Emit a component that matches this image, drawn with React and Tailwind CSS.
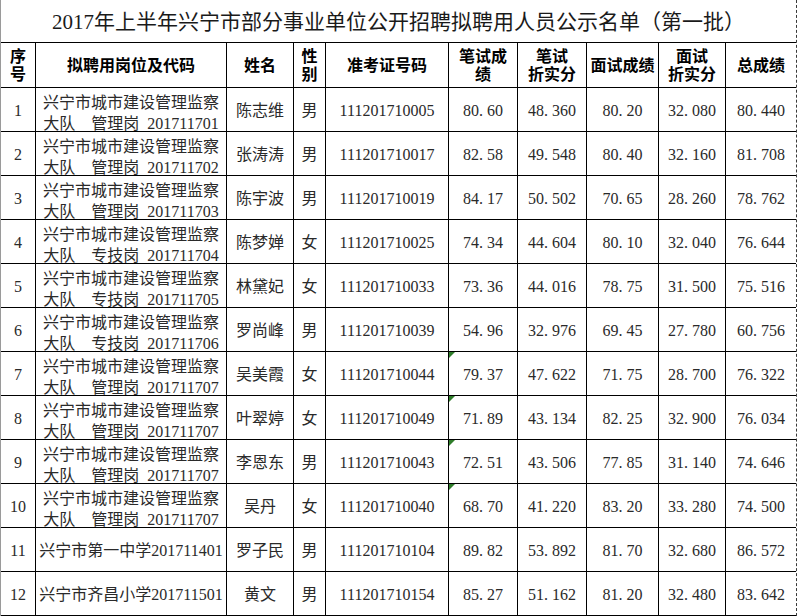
import React from "react";

const rows = [
  ["1", "管理岗", "201711701", "陈志维", "男", "111201710005", "80.60", "48.360", "80.20", "32.080", "80.440"],
  ["2", "管理岗", "201711702", "张涛涛", "男", "111201710017", "82.58", "49.548", "80.40", "32.160", "81.708"],
  ["3", "管理岗", "201711703", "陈宇波", "男", "111201710019", "84.17", "50.502", "70.65", "28.260", "78.762"],
  ["4", "专技岗", "201711704", "陈梦婵", "女", "111201710025", "74.34", "44.604", "80.10", "32.040", "76.644"],
  ["5", "专技岗", "201711705", "林黛妃", "女", "111201710033", "73.36", "44.016", "78.75", "31.500", "75.516"],
  ["6", "专技岗", "201711706", "罗尚峰", "男", "111201710039", "54.96", "32.976", "69.45", "27.780", "60.756"],
  ["7", "管理岗", "201711707", "吴美霞", "女", "111201710044", "79.37", "47.622", "71.75", "28.700", "76.322"],
  ["8", "管理岗", "201711707", "叶翠婷", "女", "111201710049", "71.89", "43.134", "82.25", "32.900", "76.034"],
  ["9", "管理岗", "201711707", "李恩东", "男", "111201710043", "72.51", "43.506", "77.85", "31.140", "74.646"],
  ["10", "管理岗", "201711707", "吴丹", "女", "111201710040", "68.70", "41.220", "83.20", "33.280", "74.500"],
  ["11", "", "兴宁市第一中学201711401", "罗子民", "男", "111201710104", "89.82", "53.892", "81.70", "32.680", "86.572"],
  ["12", "", "兴宁市齐昌小学201711501", "黄文", "男", "111201710154", "85.27", "51.162", "81.20", "32.480", "83.642"],
];

function Num({ v }) {
  const parts = v.split(".");
  return (
    <span>
      {parts[0]}
      {parts.length > 1 && (
        <>
          <span className="inline-block w-[8px] text-left">.</span>
          {parts[1]}
        </>
      )}
    </span>
  );
}

function HCell({ children, last }) {
  return (
    <div
      className={
        "flex h-[45px] flex-col items-center justify-center border-b border-black pt-[2px] text-center text-[16px] font-bold leading-[18px] text-black " +
        (last ? "" : "border-r")
      }
    >
      {children}
    </div>
  );
}

function Cell({ children, last, mark, cls = "pt-[2px]" }) {
  return (
    <div
      className={
        "relative flex h-[44px] flex-col items-center justify-center border-b border-black text-center text-[16px] leading-[21px] text-[#2a2a2a] " +
        (last ? "" : "border-r ") +
        cls
      }
    >
      {mark && (
        <span className="absolute left-0 top-0 h-0 w-0 border-r-[6px] border-t-[6px] border-r-transparent border-t-[#2f7d2a]" />
      )}
      {children}
    </div>
  );
}

export default function App() {
  return (
    <div className="h-[616px] w-[797px] overflow-hidden bg-white font-['Liberation_Serif','Noto_Sans_CJK_SC',serif]">
      <div className="h-full border-l border-[#9a9a9a]">
        <div className="h-full border-r border-dashed border-[#3a3a3a]">
          <div className="flex h-[42px] items-center justify-center pt-[3px] text-[21px] text-[#1a1a1a]">
            2017年上半年兴宁市部分事业单位公开招聘拟聘用人员公示名单（第一批）
          </div>
          <div className="grid grid-cols-[35px_191px_67px_32px_123px_69px_69px_72px_67px_70px] border-t border-black">
            <HCell>
              <span>序</span>
              <span>号</span>
            </HCell>
            <HCell>拟聘用岗位及代码</HCell>
            <HCell>姓名</HCell>
            <HCell>
              <span>性</span>
              <span>别</span>
            </HCell>
            <HCell>准考证号码</HCell>
            <HCell>
              <span>笔试成</span>
              <span>绩</span>
            </HCell>
            <HCell>
              <span>笔试</span>
              <span>折实分</span>
            </HCell>
            <HCell>面试成绩</HCell>
            <HCell>
              <span>面试</span>
              <span>折实分</span>
            </HCell>
            <HCell last>总成绩</HCell>

            {rows.map((r) => {
              const n = parseInt(r[0], 10);
              return (
                <React.Fragment key={r[0]}>
                  <Cell>{r[0]}</Cell>
                  <Cell cls={r[1] ? "pt-[6px]" : "pt-[2px]"}>
                    {r[1] ? (
                      <>
                        <span>兴宁市城市建设管理监察</span>
                        <span>
                          大队　{r[1]}
                          {"\u2002"}
                          {r[2]}
                        </span>
                      </>
                    ) : (
                      <span>{r[2]}</span>
                    )}
                  </Cell>
                  <Cell cls="pt-[2px] text-[15px]">{r[3]}</Cell>
                  <Cell cls="pt-[2px] text-[15px]">{r[4]}</Cell>
                  <Cell>{r[5]}</Cell>
                  <Cell mark={n >= 7 && n <= 10}>
                    <Num v={r[6]} />
                  </Cell>
                  <Cell>
                    <Num v={r[7]} />
                  </Cell>
                  <Cell>
                    <Num v={r[8]} />
                  </Cell>
                  <Cell>
                    <Num v={r[9]} />
                  </Cell>
                  <Cell last>
                    <Num v={r[10]} />
                  </Cell>
                </React.Fragment>
              );
            })}
          </div>
        </div>
      </div>
    </div>
  );
}
